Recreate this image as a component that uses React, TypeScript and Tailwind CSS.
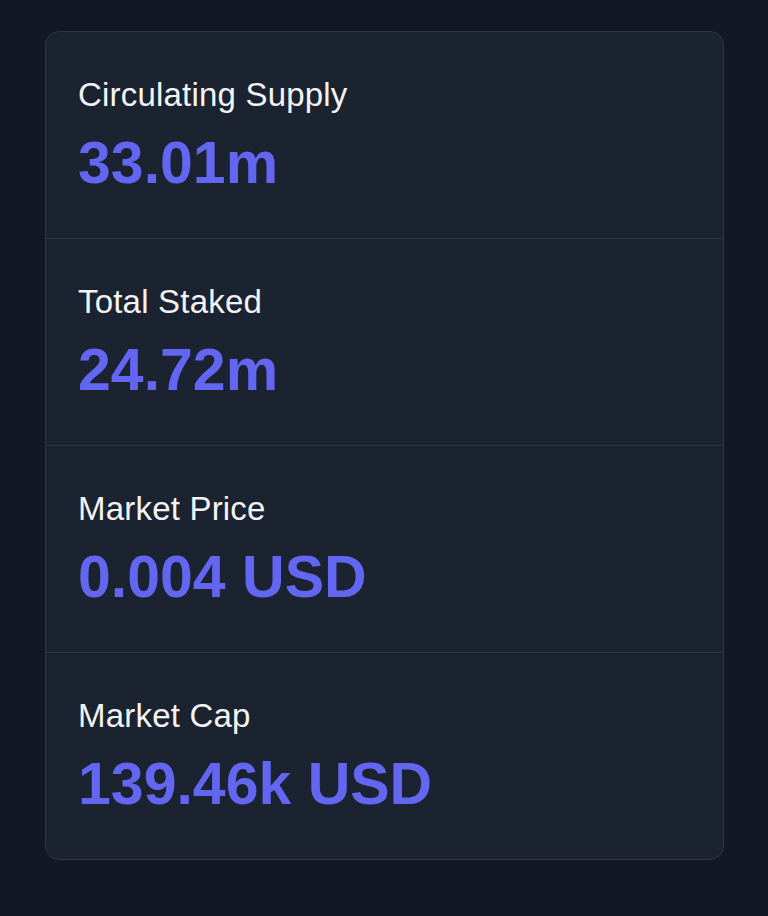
const stats = [
  { label: "Circulating Supply", value: "33.01m" },
  { label: "Total Staked", value: "24.72m" },
  { label: "Market Price", value: "0.004 USD" },
  { label: "Market Cap", value: "139.46k USD" },
];

export default function App() {
  return (
    <div className="min-h-[916px] w-full bg-[#121826] pt-[31px] pl-[45px] pr-[44px] font-['Liberation_Sans',_Arial,_sans-serif]">
      <div className="rounded-[14px] border border-[#2f3747] bg-[#1b2230] divide-y divide-[#2f3747]">
        {stats.map((s) => (
          <div key={s.label} className="pl-[32px] pt-[43px] pb-[45px]">
            <p className="text-[33px] leading-[40px] text-[#f3f4f6] tracking-[0.2px]">{s.label}</p>
            <p className="mt-[18px] text-[59px] leading-[60px] font-bold text-[#6366f1]">{s.value}</p>
          </div>
        ))}
      </div>
    </div>
  );
}
